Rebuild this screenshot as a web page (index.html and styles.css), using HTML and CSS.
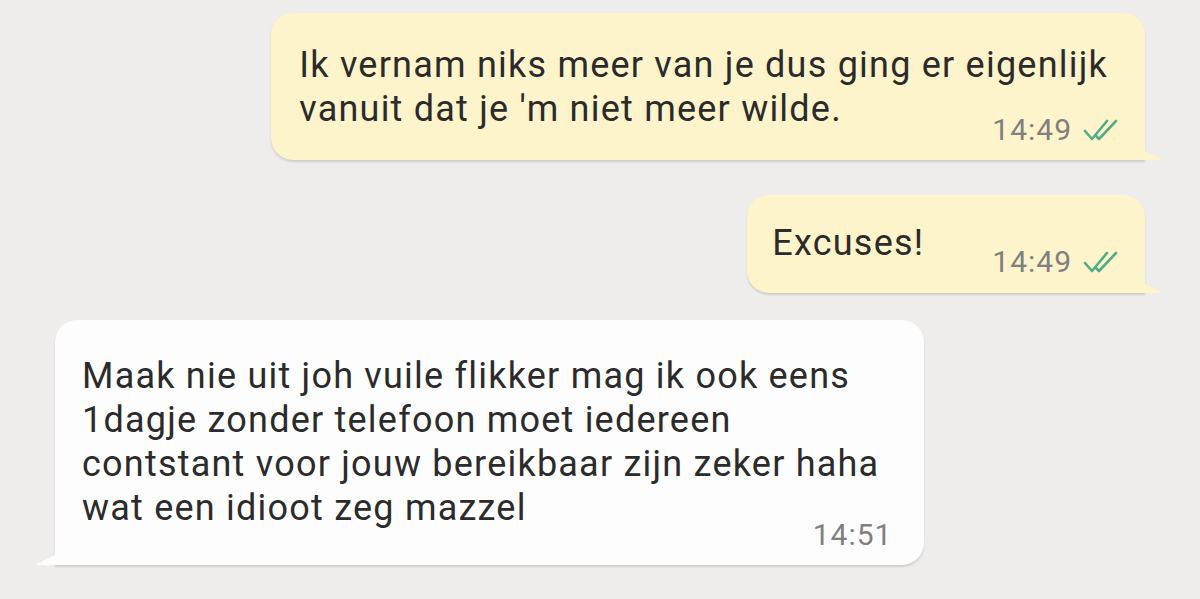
FILE: index.html
```html
<!DOCTYPE html>
<html lang="nl">
<head>
<meta charset="utf-8">
<title>Chat</title>
<link rel="stylesheet" href="styles.css">
</head>
<body>
<main class="chat">
  <div class="row row--out row--first">
    <div class="bubble bubble--out">
      <p class="text">Ik vernam niks meer van je dus ging er eigenlijk<br>vanuit dat je 'm niet meer wilde.</p>
      <div class="meta meta--stacked">
        <span class="time">14:49</span>
        <svg class="ticks" viewBox="0 0 40 24" width="40" height="24"><path d="M3 13 L10 21 L25 3" /><path d="M14 18 L17 21 L34 3" /></svg>
      </div>
    </div>
  </div>
  <div class="row row--out">
    <div class="bubble bubble--out bubble--inline">
      <p class="text">Excuses!</p>
      <div class="meta meta--inline">
        <span class="time">14:49</span>
        <svg class="ticks" viewBox="0 0 40 24" width="40" height="24"><path d="M3 13 L10 21 L25 3" /><path d="M14 18 L17 21 L34 3" /></svg>
      </div>
    </div>
  </div>
  <div class="row row--in">
    <div class="bubble bubble--in">
      <p class="text">Maak nie uit joh vuile flikker mag ik ook eens<br>1dagje zonder telefoon moet iedereen<br>contstant voor jouw bereikbaar zijn zeker haha<br>wat een idioot zeg mazzel</p>
      <div class="meta meta--stacked meta--in">
        <span class="time">14:51</span>
      </div>
    </div>
  </div>
</main>
</body>
</html>
```
FILE: styles.css
```css
html, body {
  margin: 0;
  padding: 0;
  background: #eeedeb;
  width: 1200px;
  height: 599px;
  overflow: hidden;
}

body {
  font-family: Roboto, "Noto Sans", sans-serif;
  color: #2b2b2b;
}

.chat {
  display: flex;
  flex-direction: column;
  padding: 13px 55px 0 55px;
}

.row {
  display: flex;
}

.row--out {
  justify-content: flex-end;
}

.row--out + .row--out {
  margin-top: 35px;
}

.row--in {
  justify-content: flex-start;
  margin-top: 27px;
}

.bubble {
  position: relative;
  border-radius: 22px;
  box-shadow: 0 2px 2px rgba(0, 0, 0, 0.13);
}

.bubble--out {
  background: #fef4cb;
  border-bottom-right-radius: 0;
  padding: 30px 37px 15px 28px;
}

.bubble--out::after {
  content: "";
  position: absolute;
  right: -18px;
  bottom: 0;
  width: 18px;
  height: 9px;
  background: #fef4cb;
  clip-path: polygon(0 0, 100% 100%, 0 100%);
}

.bubble--in {
  background: #fdfdfd;
  border-bottom-left-radius: 0;
  padding: 34px 45px 15px 27px;
}

.bubble--in::after {
  content: "";
  position: absolute;
  left: -20px;
  bottom: 0;
  width: 20px;
  height: 10px;
  background: #fdfdfd;
  clip-path: polygon(100% 0, 100% 100%, 0 100%);
}

.bubble--inline {
  display: flex;
  align-items: flex-start;
  padding: 26px 23px 16px 25px;
}

.text {
  margin: 0;
  font-size: 36px;
  line-height: 44px;
  letter-spacing: 1.22px;
  white-space: nowrap;
}

.meta {
  display: flex;
  align-items: center;
  gap: 10px;
  color: #808080;
}

.meta--stacked {
  justify-content: flex-end;
  margin-top: -16px;
  margin-right: -14px;
}

.meta--in {
  margin-top: -10px;
  margin-right: -13px;
}

.meta--inline {
  margin-left: 68px;
  margin-top: 26px;
}

.time {
  font-size: 30px;
  line-height: 30px;
  letter-spacing: 1px;
}

.ticks {
  fill: none;
  stroke: #50ad86;
  stroke-width: 2.6;
  stroke-linecap: round;
  stroke-linejoin: round;
}
```
